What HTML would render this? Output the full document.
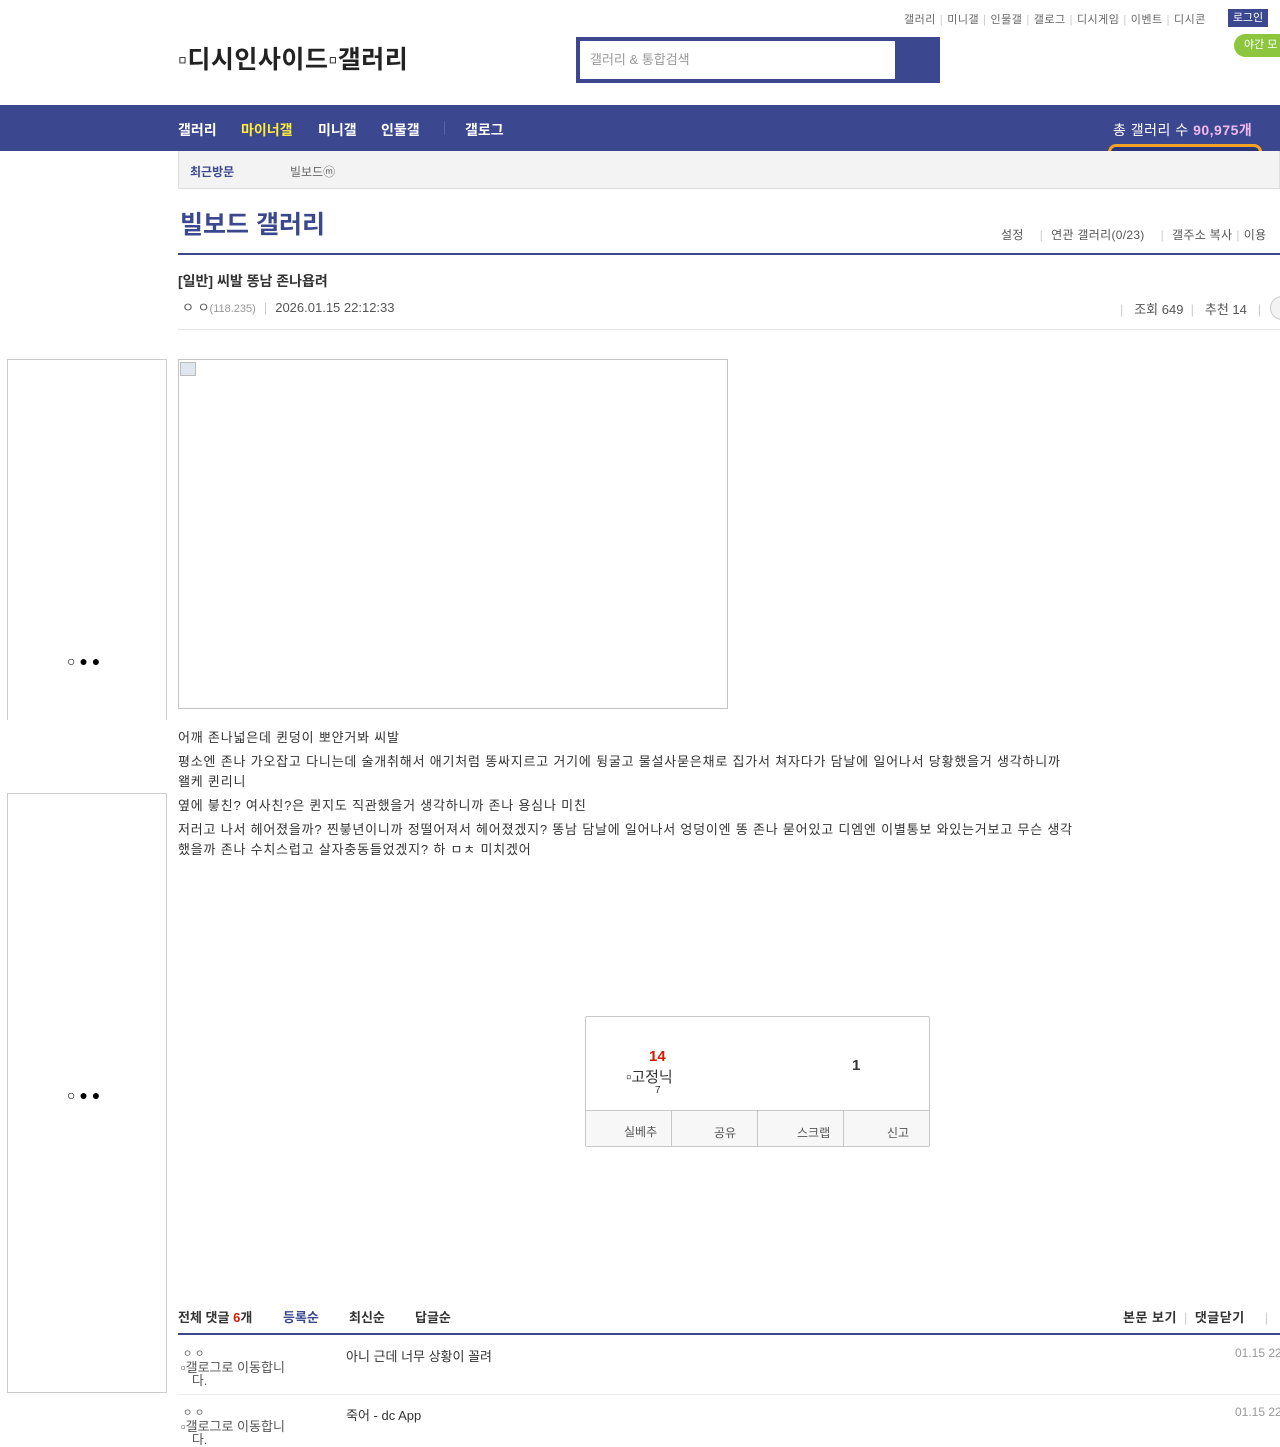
<!DOCTYPE html>
<html><head><meta charset="utf-8"><style>
*{margin:0;padding:0;box-sizing:border-box}
body{width:1280px;height:1440px;position:relative;overflow:hidden;background:#fff;font-family:"Liberation Sans","Noto Sans CJK KR",sans-serif;color:#333;font-size:12px}
.a{position:absolute;white-space:nowrap}
.b{font-weight:bold}
.s{color:#ccc;padding:0 4px}
</style></head><body>
<div class="a" style="left:904px;top:11px;font-size:11px;color:#666;letter-spacing:0.5px">갤러리<span class="s">|</span>미니갤<span class="s">|</span>인물갤<span class="s">|</span>갤로그<span class="s">|</span>디시게임<span class="s">|</span>이벤트<span class="s">|</span>디시콘</div>
<div class="a" style="left:1228px;top:9px;width:40px;height:18px;background:#3b4890;color:#fff;font-size:11px;text-align:center;line-height:18px">로그인</div>
<div class="a" style="left:1234px;top:34px;width:60px;height:23px;background:#8cc63f;border-radius:12px;color:#fff;font-size:11px;line-height:23px;padding-left:10px">야간 모</div>
<div class="a b" style="left:178px;top:40px;font-size:25px;color:#222;letter-spacing:0.5px">▫디시인사이드▫갤러리</div>
<div class="a" style="left:576px;top:37px;width:364px;height:46px;background:#3b4890"></div>
<div class="a" style="left:580px;top:41px;width:315px;height:38px;background:#fff;color:#999;font-size:13px;line-height:38px;padding-left:10px">갤러리 &amp; 통합검색</div>
<div class="a" style="left:0;top:105px;width:1280px;height:46px;background:#3b4890"></div>
<div class="a b" style="left:178px;top:120px;font-size:14px;color:#fff">갤러리</div>
<div class="a b" style="left:241px;top:120px;font-size:14px;color:#ffeb3b">마이너갤</div>
<div class="a b" style="left:318px;top:120px;font-size:14px;color:#fff">미니갤</div>
<div class="a b" style="left:381px;top:120px;font-size:14px;color:#fff">인물갤</div>
<div class="a" style="left:444px;top:121px;width:1px;height:14px;background:#5a66a8"></div>
<div class="a b" style="left:465px;top:120px;font-size:14px;color:#fff">갤로그</div>
<div class="a" style="left:1113px;top:120px;font-size:14px;color:#fff;letter-spacing:0.5px">총 갤러리 수 <b style="color:#f0b8f0">90,975개</b></div>
<div class="a" style="left:1108px;top:144px;width:154px;height:10px;border:3px solid #f4a223;border-bottom:none;border-radius:8px 8px 0 0;background:#29367a"></div>
<div class="a" style="left:178px;top:151px;width:1102px;height:38px;background:#f3f3f3;border:1px solid #ddd;border-top:none"></div>
<div class="a b" style="left:190px;top:163px;font-size:12px;color:#3b4890">최근방문</div>
<div class="a" style="left:290px;top:163px;font-size:12px;color:#666">빌보드ⓜ</div>
<div class="a b" style="left:180px;top:205px;font-size:25px;color:#3b4890">빌보드 갤러리</div>
<div class="a" style="left:1001px;top:226px;font-size:12px;color:#555;letter-spacing:0.3px">설정<span class="s" style="padding:0 8px 0 16px">|</span>연관 갤러리(0/23)<span class="s" style="padding:0 8px 0 16px">|</span>갤주소 복사<span class="s">|</span>이용</div>
<div class="a" style="left:178px;top:253px;width:1102px;height:2px;background:#3b4890"></div>
<div class="a b" style="left:178px;top:271px;font-size:14px;color:#333">[일반] 씨발 똥남 존나욥려</div>
<div class="a" style="left:182px;top:297px;font-size:13px;color:#555">ㅇ ㅇ<span style="font-size:11px;color:#999">(118.235)</span><span class="s" style="padding:0 8px">|</span>2026.01.15 22:12:33</div>
<div class="a" style="left:1120px;top:299px;font-size:13px;color:#555"><span style="color:#ccc">|</span>&nbsp;&nbsp; 조회 649 &nbsp;<span style="color:#ccc">|</span>&nbsp;&nbsp; 추천 14 &nbsp;&nbsp;<span style="color:#ccc">|</span></div>
<div class="a" style="left:1270px;top:296px;width:24px;height:24px;border:1px solid #ccc;border-radius:12px;background:#f3f3f3"></div>
<div class="a" style="left:178px;top:329px;width:1102px;height:1px;background:#e5e5e5"></div>
<div class="a" style="left:7px;top:359px;width:160px;height:361px;border:1px solid #ccc;border-bottom:none"></div>
<div class="a" style="left:67px;top:653px;font-size:14px;color:#000">○ ● ●</div>
<div class="a" style="left:7px;top:793px;width:160px;height:600px;border:1px solid #ccc"></div>
<div class="a" style="left:67px;top:1087px;font-size:14px;color:#000">○ ● ●</div>
<div class="a" style="left:178px;top:359px;width:550px;height:350px;border:1px solid #c4c4c4"></div>
<div class="a" style="left:180px;top:362px;width:16px;height:14px;background:#e0e6ef;border:1px solid #bbb"></div>
<div style="position:absolute;left:178px;top:728px;width:960px;font-size:13px;line-height:20px;color:#333;letter-spacing:0.8px;white-space:nowrap">
<p style="margin-bottom:4px">어깨 존나넓은데 퀸덩이 뽀얀거봐 씨발</p>
<p style="margin-bottom:4px">평소엔 존나 가오잡고 다니는데 술개취해서 애기처럼 똥싸지르고 거기에 뒹굴고 물설사묻은채로 집가서 쳐자다가 담날에 일어나서 당황했을거 생각하니까<br>왤케 퀸리니</p>
<p style="margin-bottom:4px">옆에 븧친? 여사친?은 퀸지도 직관했을거 생각하니까 존나 용심나 미친</p>
<p>저러고 나서 헤어졌을까? 찐븧년이니까 정떨어져서 헤어졌겠지? 똥남 담날에 일어나서 엉덩이엔 똥 존나 묻어있고 디엠엔 이별통보 와있는거보고 무슨 생각<br>했을까 존나 수치스럽고 살자충동들었겠지? 하 ㅁㅊ 미치겠어</p></div>
<div class="a" style="left:585px;top:1016px;width:345px;height:131px;border:1px solid #c8c8c8;border-radius:2px"></div>
<div class="a" style="left:586px;top:1110px;width:343px;height:36px;background:#f7f7f7;border-top:1px solid #c8c8c8"></div>
<div class="a" style="left:671px;top:1111px;width:1px;height:35px;background:#c8c8c8"></div>
<div class="a" style="left:757px;top:1111px;width:1px;height:35px;background:#c8c8c8"></div>
<div class="a" style="left:843px;top:1111px;width:1px;height:35px;background:#c8c8c8"></div>
<div class="a b" style="left:649px;top:1048px;font-size:15px;color:#d31900">14</div>
<div class="a" style="left:626px;top:1066px;font-size:15px;color:#333">▫고정닉</div>
<div class="a" style="left:655px;top:1085px;font-size:10px;color:#333">7</div>
<div class="a b" style="left:852px;top:1057px;font-size:15px;color:#333">1</div>
<div class="a" style="left:624px;top:1123px;font-size:12px;color:#555">실베추</div>
<div class="a" style="left:714px;top:1124px;font-size:12px;color:#555">공유</div>
<div class="a" style="left:797px;top:1124px;font-size:12px;color:#555">스크랩</div>
<div class="a" style="left:887px;top:1124px;font-size:12px;color:#555">신고</div>
<div class="a b" style="left:178px;top:1307px;font-size:13px;color:#333">전체 댓글 <span style="color:#d31900">6</span>개</div>
<div class="a b" style="left:283px;top:1307px;font-size:13px;color:#3b4890">등록순</div>
<div class="a b" style="left:349px;top:1307px;font-size:13px;color:#333">최신순</div>
<div class="a b" style="left:415px;top:1307px;font-size:13px;color:#333">답글순</div>
<div class="a b" style="left:1123px;top:1307px;font-size:13px;color:#333;letter-spacing:0.5px">본문 보기<span class="s" style="font-weight:normal;padding:0 7px">|</span>댓글닫기<span class="s" style="font-weight:normal;padding:0 0 0 20px">|</span></div>
<div class="a" style="left:178px;top:1333px;width:1102px;height:2px;background:#3b4890"></div>
<div class="a" style="left:183px;top:1345px;font-size:10px;color:#666">ㅇ ㅇ</div>
<div class="a" style="left:181px;top:1361px;font-size:13px;color:#555;line-height:13px">▫갤로그로 이동합니<br>&nbsp;&nbsp;&nbsp;다.</div>
<div class="a" style="left:346px;top:1346px;font-size:13px;color:#333">아니 근데 너무 상황이 꼴려</div>
<div class="a" style="left:1235px;top:1346px;font-size:12px;color:#999">01.15 22</div>
<div class="a" style="left:178px;top:1394px;width:1102px;height:1px;background:#eee"></div>
<div class="a" style="left:183px;top:1404px;font-size:10px;color:#666">ㅇ ㅇ</div>
<div class="a" style="left:181px;top:1420px;font-size:13px;color:#555;line-height:13px">▫갤로그로 이동합니<br>&nbsp;&nbsp;&nbsp;다.</div>
<div class="a" style="left:346px;top:1405px;font-size:13px;color:#333">죽어 - dc App</div>
<div class="a" style="left:1235px;top:1405px;font-size:12px;color:#999">01.15 22</div>
</body></html>
